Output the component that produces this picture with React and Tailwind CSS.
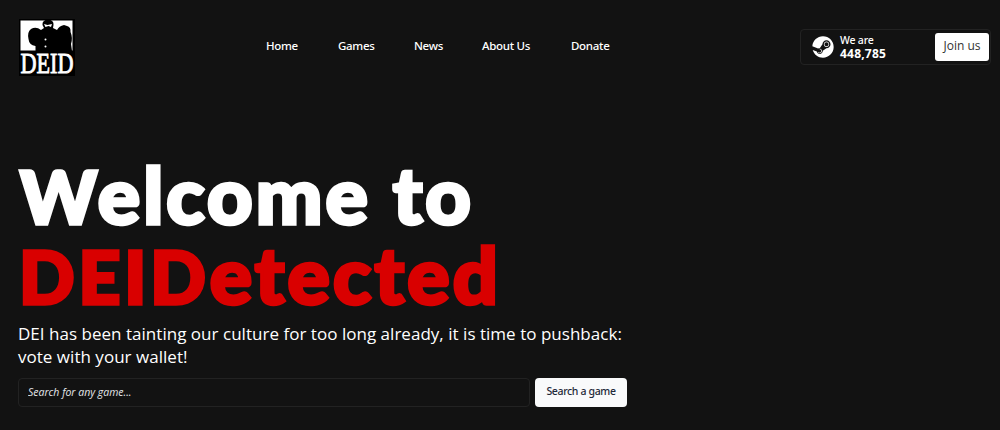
import React from 'react';
import { FaSteam } from 'react-icons/fa';

const links = [
    { label: 'Home', width: 'w-[32px]' },
    { label: 'Games', width: 'w-[36px]' },
    { label: 'News', width: 'w-[28px]' },
    { label: 'About Us', width: 'w-[49px]' },
    { label: 'Donate', width: 'w-[38px]' },
];

function Logo() {
    return (
        <svg viewBox="0 0 56 57" className="w-[56px] h-[57px] overflow-visible">
            <rect width="56" height="57" fill="#000" />
            <rect x="1.500" y="1.500" width="52" height="30" fill="#fff" />
            <path
                d="M23.500 6 Q23 1 29 0.500 Q35 1 34.500 6 L34 9 L38 11 Q40 7 45 6 L48 7 Q52 8 51.500 13 Q54 19 52 25 L53 32 H16.500 V27 Q10 26 9.500 20 Q8 13 12 10 Q17 7 22 11 L25 9 Z"
                fill="#000"
            />
            <path d="M25 5 L28.500 6 L33 5 L32 8 L29.500 7 L26.500 8 Z" fill="#fff" />
            <circle cx="26.500" cy="20.500" r="1" fill="#fff" />
            <circle cx="26.500" cy="27.500" r="1" fill="#fff" />
            <text
                x="1.500"
                y="53.500"
                fill="#fff"
                stroke="#fff"
                strokeWidth="0.9"
                fontSize="30"
                fontFamily="Liberation Serif, serif"
                textLength="53"
                lengthAdjust="spacingAndGlyphs"
            >
                DEID
            </text>
        </svg>
    );
}

function Header() {
    return (
        <header className="flex items-start h-[94px] pt-[19px] pl-[19px] pr-[9px]">
            <Logo />
            <nav className="flex gap-10 ml-[191px] mt-[18px] font-['Noto_Sans',sans-serif] text-[11.500px] leading-[18px] font-medium tracking-[-0.3px]">
                {links.map((link) => (
                    <a key={link.label} href="#" className={`${link.width} whitespace-nowrap`}>
                        {link.label}
                    </a>
                ))}
            </nav>
            <div className="flex items-center ml-auto mt-[10px] w-[191px] h-[36px] pl-[11px] pr-px border border-[#222] rounded">
                <FaSteam className="w-[22px] h-[22px]" />
                <div className="ml-[6px] text-[10.500px] leading-[13px] font-['Noto_Sans',sans-serif]">
                    <p className="font-medium tracking-[-0.2px]">We are</p>
                    <p className="font-bold text-[12px] tracking-[0.2px]">448,785</p>
                </div>
                <button className="ml-auto w-[54px] h-[28px] rounded-[3px] bg-white text-[#333] text-[12px] pb-0.5">
                    Join us
                </button>
            </div>
        </header>
    );
}

export default function App() {
    return (
        <div className="w-[1000px] h-[430px] overflow-hidden bg-[#121212] text-white font-['Open_Sans',sans-serif]">
            <Header />
            <main className="pl-[18px] pt-[60px]">
                <h1 className="font-['Lato',sans-serif] text-[79px] leading-[80px] h-[160px] font-black whitespace-nowrap [-webkit-text-stroke:3.500px_currentColor]">
                    <span className="block h-[80px] pl-[2px] tracking-[3.100px]">
                        <span className="text-[73px] tracking-[0.500px]">W</span>elcome to
                    </span>
                    <span className="block h-[80px] pl-px text-[#d90000] tracking-[3.200px]">
                        <span className="text-[73px] tracking-[3.900px]">DEID</span>etected
                    </span>
                </h1>
                <p className="mt-[8px] text-[17px] leading-[23px] tracking-[0.025px] whitespace-nowrap">
                    DEI has been tainting our culture for too long already, it is time to pushback:
                    <br />
                    vote with your wallet!
                </p>
                <form className="flex gap-[5px] mt-[10px]">
                    <input
                        type="text"
                        placeholder="Search for any game..."
                        className="w-[512px] h-[29px] px-[9px] pb-0.5 border border-[#222] rounded text-[10.500px] italic placeholder:text-gray-200"
                    />
                    <button type="button" className="w-[92px] h-[29px] pb-0.5 rounded bg-gray-50 text-gray-800 text-[10.500px] font-medium font-['Noto_Sans',sans-serif] tracking-[-0.35px]">
                        Search a game
                    </button>
                </form>
            </main>
        </div>
    );
}
